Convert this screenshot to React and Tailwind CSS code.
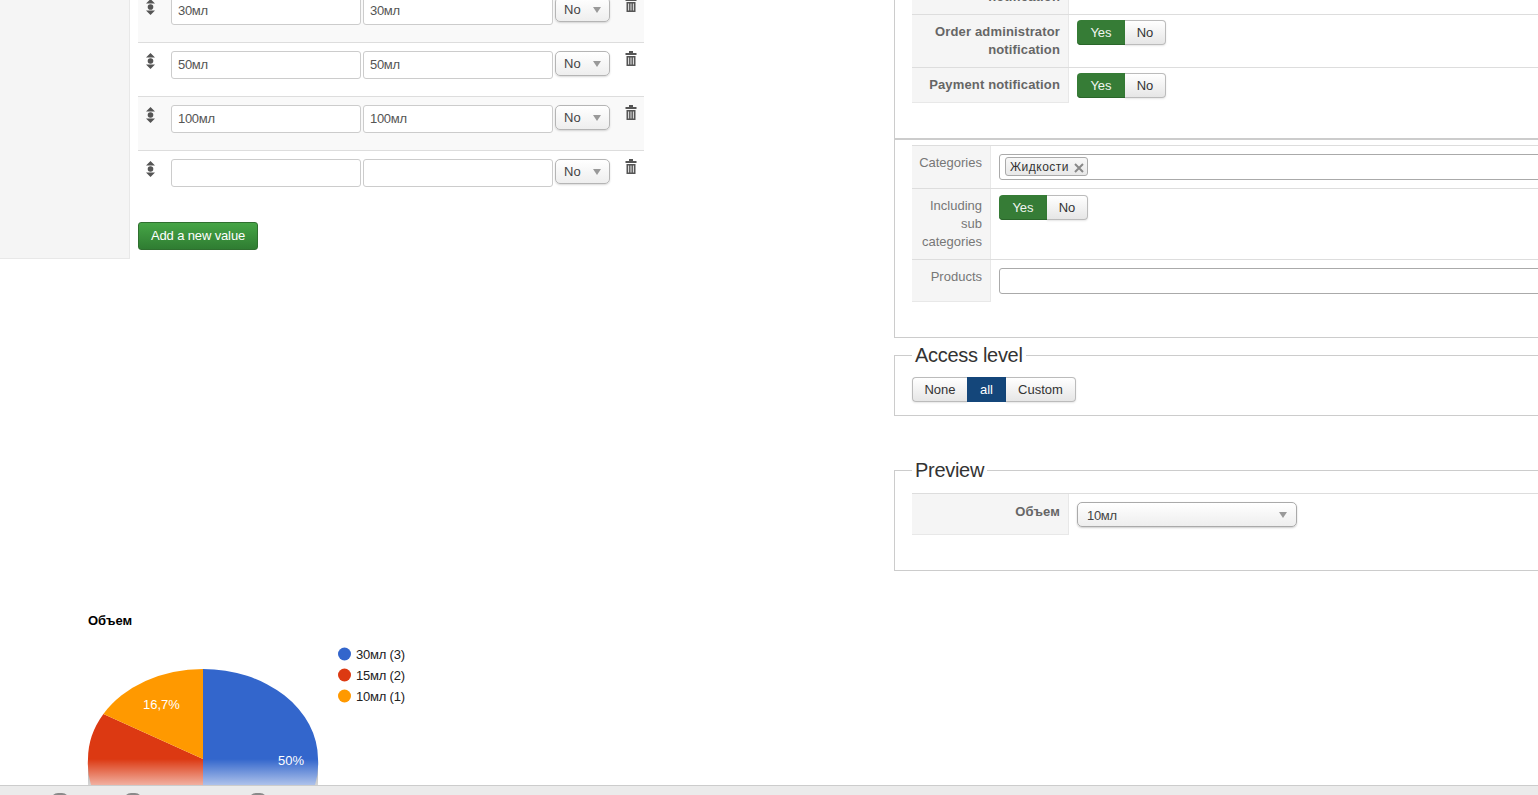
import React from 'react';

const rows = [
    { value: '30мл', bg: 'bg-[#f9f9f9]' },
    { value: '50мл', bg: 'bg-white' },
    { value: '100мл', bg: 'bg-[#f9f9f9]' },
    { value: '', bg: 'bg-white' },
];

const idleBtn = 'bg-gradient-to-b from-white to-[#e6e6e6] text-[#333]';

const DragIcon = () => (
    <svg width="11" height="16" viewBox="0 0 11 16" className="ml-[7px] mt-[2px] shrink-0">
        <path d="M5.5 0 L10 4.5 H1 Z M5.5 16 L10 11.5 H1 Z" fill="#555" />
        <circle cx="5.5" cy="8" r="2.8" fill="#555" />
    </svg>
);

const TrashIcon = () => (
    <svg width="12" height="15" viewBox="0 0 12 15" className="ml-[15px] shrink-0">
        <path d="M4 0 H8 V2 H11.5 V4 H0.5 V2 H4 Z" fill="#555" />
        <path fillRule="evenodd" d="M1.5 5 H10.5 V15 H1.5 Z M3.2 6.5 V13.5 H4.1 V6.5 Z M5.55 6.5 V13.5 H6.45 V6.5 Z M7.9 6.5 V13.5 H8.8 V6.5 Z" fill="#555" />
    </svg>
);

const Arrow = ({ className }) => (
    <svg width="8" height="6" viewBox="0 0 8 6" className={className}>
        <path d="M0 0 H8 L4 6 Z" fill="#999" />
    </svg>
);

const NoSelect = () => (
    <div className="ml-[2px] flex h-[25px] w-[55px] shrink-0 items-center justify-between rounded-[5px] border border-[#b5b5b5] bg-gradient-to-b from-white to-[#eeeeee] pl-[8px] pr-[8px] text-[13px] text-[#444] shadow-[0_1px_2px_rgba(0,0,0,0.15)]">
        <span>No</span>
        <Arrow />
    </div>
);

const ValueRow = ({ value, bg, first }) => (
    <div className={`flex h-[54px] items-start ${bg} ${first ? 'pt-[9px]' : 'border-t border-[#dddddd] pt-[8px]'}`}>
        <DragIcon />
        <input readOnly value={value} className="ml-[15px] h-[28px] w-[190px] shrink-0 rounded-[3px] border border-[#cccccc] bg-white px-[6px] pb-[2px] text-[13px] tracking-[-0.3px] text-[#555] outline-none" />
        <input readOnly value={value} className="ml-[2px] h-[28px] w-[190px] shrink-0 rounded-[3px] border border-[#cccccc] bg-white px-[6px] pb-[2px] text-[13px] tracking-[-0.3px] text-[#555] outline-none" />
        <NoSelect />
        <TrashIcon />
    </div>
);

// Yes / No group, the active one is flat green
const Toggle = () => (
    <div className="flex h-[25px] w-[89px] text-[13px]">
        <span className="flex w-[48px] items-center justify-center rounded-l-[4px] bg-[#367c36] text-[#f0f5f0] shadow-[inset_0_-1px_0_#2a662a]">Yes</span>
        <span className={`flex flex-1 items-center justify-center rounded-r-[4px] border border-l-0 border-[#bbbbbb] shadow-[0_1px_2px_rgba(0,0,0,0.1)] ${idleBtn}`}>No</span>
    </div>
);

const FormRow = ({ label, labelWidth, bold, last, children }) => (
    <div className="flex border-t border-[#dddddd]">
        <div
            className={`${labelWidth} shrink-0 border-r border-[#e8e8e8] bg-[#f5f5f5] py-[8px] pr-[8px] text-right text-[13px] leading-[18px] ${bold ? 'font-bold tracking-[0.15px] text-[#666]' : 'text-[#777]'} ${last ? 'border-b' : ''}`}
        >
            {label}
        </div>
        <div className="flex-1 pl-[8px] pt-[5px]">{children}</div>
    </div>
);

const Legend = ({ children }) => (
    <legend className="ml-[17px] px-[3px] text-[20px] leading-[24px] tracking-[-0.3px] text-[#333]">{children}</legend>
);

const PieChart = () => (
    <svg width="450" height="195" viewBox="0 600 450 195" className="block font-['Liberation_Sans',sans-serif]">
        <defs>
            <linearGradient id="fade" x1="0" y1="0" x2="0" y2="1">
                <stop offset="0" stopColor="#fff" stopOpacity="0" />
                <stop offset="1" stopColor="#fff" stopOpacity="0.6" />
            </linearGradient>
        </defs>
        <text x="88" y="625" fontSize="13" fontWeight="bold" fill="#000">Объем</text>
        {/* grey wedge left under the curve of the stretched pie */}
        <rect x="88" y="759" width="230" height="26" fill="#999" />
        <path d="M203 759 V669 A115 90 0 0 1 318 759 A115 90 0 0 1 315 785 H203 Z" fill="#3366cc" />
        <path d="M203 759 V785 H91 A115 90 0 0 1 88 759 A115 90 0 0 1 103.4 714 Z" fill="#dc3912" />
        <path d="M203 759 L103.4 714 A115 90 0 0 1 203 669 Z" fill="#ff9900" />
        <rect x="88" y="759" width="230" height="26" fill="url(#fade)" />
        <text x="143" y="709" fontSize="13" fill="#fff">16,7%</text>
        <text x="278" y="765" fontSize="13" fill="#fff">50%</text>
        <circle cx="344.5" cy="654" r="6.5" fill="#3366cc" />
        <circle cx="344.5" cy="675" r="6.5" fill="#dc3912" />
        <circle cx="344.5" cy="696" r="6.5" fill="#ff9900" />
        <text x="356" y="659" fontSize="13" letterSpacing="-0.2" fill="#222">30мл (3)</text>
        <text x="356" y="680" fontSize="13" letterSpacing="-0.2" fill="#222">15мл (2)</text>
        <text x="356" y="701" fontSize="13" letterSpacing="-0.2" fill="#222">10мл (1)</text>
    </svg>
);

export default function App() {
    return (
        <div className="relative flex h-[795px] w-[1538px] items-start overflow-hidden bg-white font-['Liberation_Sans',sans-serif]">
            {/* Left: option values and chart */}
            <div className="-mt-[12px] w-[894px] shrink-0">
                <div className="flex">
                    <div className="w-[130px] shrink-0 border-b border-r border-[#e8e8e8] bg-[#f5f5f5]" />
                    <div className="ml-[8px] w-[506px] pb-[9px]">
                        {rows.map((r, i) => (
                            <ValueRow key={i} value={r.value} bg={r.bg} first={i === 0} />
                        ))}
                        <button className="mt-[18px] block h-[28px] w-[120px] rounded-[3px] border border-[#2f6f2f] bg-gradient-to-b from-[#46a546] to-[#2f7d32] text-[13px] tracking-[-0.13px] text-white">
                            Add a new value
                        </button>
                    </div>
                </div>
                <div className="mt-[341px]">
                    <PieChart />
                </div>
            </div>

            {/* Right: notification, categories, access and preview */}
            <div className="-mt-[39px] w-[700px] shrink-0">
                <div className="border-b border-l border-[#cccccc] pl-[17px]">
                    <div className="flex h-[53px]">
                        <div className="w-[157px] shrink-0 border-r border-[#e8e8e8] bg-[#f5f5f5] pr-[8px] pt-[27px] text-right text-[13px] font-bold leading-[18px] tracking-[0.15px] text-[#666]">
                            notification
                        </div>
                    </div>
                    <FormRow label={<>Order administrator<br />notification</>} labelWidth="w-[157px]" bold>
                        <Toggle />
                    </FormRow>
                    <FormRow label="Payment notification" labelWidth="w-[157px]" bold last>
                        <Toggle />
                    </FormRow>
                    <div className="-ml-[17px] mt-[35px] h-[2px] bg-[#cccccc]" />
                    <div className="mt-[5px] pb-[35px]">
                        <FormRow label="Categories" labelWidth="w-[79px]">
                            <div className="mb-[8px] mt-[3px] flex h-[26px] items-start rounded-[3px] border border-[#aaaaaa] bg-white pl-[5px] pt-[2px]">
                                <span className="flex h-[19px] w-[83px] items-center gap-[5px] rounded-[3px] border border-[#aaaaaa] bg-gradient-to-b from-[#f8f8f8] to-[#e8e8e8] pl-[4px] text-[12px] tracking-[0.5px] text-[#333]">
                                    Жидкости
                                    <svg width="10" height="10" viewBox="0 0 10 10" className="mt-[2px] shrink-0">
                                        <path d="M1 1 L9 9 M9 1 L1 9" stroke="#888" strokeWidth="2" />
                                    </svg>
                                </span>
                            </div>
                        </FormRow>
                        <FormRow label={<>Including<br />sub<br />categories</>} labelWidth="w-[79px]">
                            <div className="mt-[1px]">
                                <Toggle />
                            </div>
                        </FormRow>
                        <FormRow label="Products" labelWidth="w-[79px]" last>
                            <div className="mb-[8px] mt-[3px] h-[26px] rounded-[3px] border border-[#aaaaaa] bg-white" />
                        </FormRow>
                    </div>
                </div>

                <fieldset className="mt-[5px] h-[73px] border border-[#cccccc]">
                    <Legend>Access level</Legend>
                    <div className="ml-[17px] mt-[10px] flex h-[25px] w-[164px] text-[13px]">
                        <span className={`flex w-[55px] items-center justify-center rounded-l-[4px] border border-r-0 border-[#bbbbbb] shadow-[0_1px_2px_rgba(0,0,0,0.1)] ${idleBtn}`}>None</span>
                        <span className="flex w-[39px] items-center justify-center bg-[#14467a] text-white">all</span>
                        <span className={`flex flex-1 items-center justify-center rounded-r-[4px] border border-l-0 border-[#bbbbbb] shadow-[0_1px_2px_rgba(0,0,0,0.1)] ${idleBtn}`}>Custom</span>
                    </div>
                </fieldset>

                <fieldset className="mt-[42px] h-[113px] border border-[#cccccc]">
                    <Legend>Preview</Legend>
                    <div className="ml-[17px] mt-[11px]">
                        <FormRow label={<span className="relative top-[1px]">Объем</span>} labelWidth="w-[157px]" bold last>
                            <div className="mb-[8px] mt-[3px] flex h-[25px] w-[220px] items-center justify-between rounded-[5px] border border-[#aaaaaa] bg-gradient-to-b from-white to-[#eeeeee] pl-[9px] pr-[9px] text-[13px] tracking-[-0.3px] text-[#444] shadow-[0_1px_2px_rgba(0,0,0,0.2)]">
                                <span className="pt-[2px]">10мл</span>
                                <Arrow />
                            </div>
                        </FormRow>
                    </div>
                </fieldset>
            </div>

            {/* Browser bar along the bottom */}
            <div className="absolute bottom-0 left-0 right-0 flex h-[10px] overflow-hidden border-t border-[#cccccc] bg-[#ebebeb] pl-[51px]">
                <span className="mt-[7px] h-[18px] w-[18px] shrink-0 rounded-[7px] bg-[#8a8a8a]" />
                <span className="ml-[55px] mt-[7px] h-[18px] w-[18px] shrink-0 rounded-[7px] bg-[#8a8a8a]" />
                <span className="ml-[107px] mt-[7px] h-[18px] w-[18px] shrink-0 rounded-[7px] bg-[#8a8a8a]" />
            </div>
        </div>
    );
}
